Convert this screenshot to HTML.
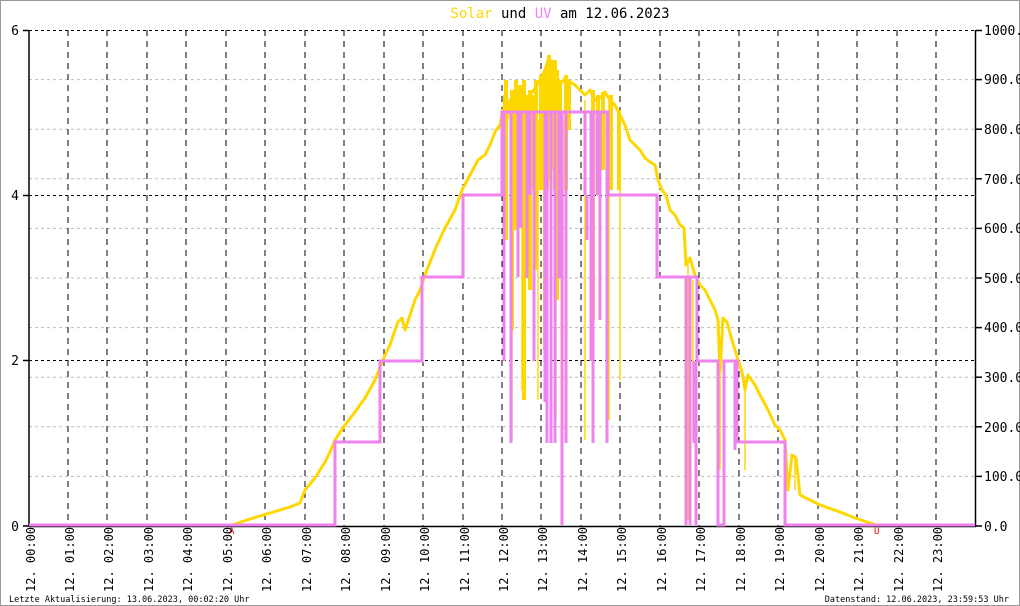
<!DOCTYPE html>
<html><head><meta charset="utf-8"><style>
html,body{margin:0;padding:0;background:#fff}
svg{display:block}
text{font-family:"DejaVu Sans Mono","Liberation Mono",monospace}
</style></head><body>
<svg width="1020" height="606" viewBox="0 0 1020 606" xmlns="http://www.w3.org/2000/svg">
<rect x="0.5" y="0.5" width="1019" height="605" fill="#fff" stroke="#999"/>
<text x="560" y="18" font-size="14" text-anchor="middle"><tspan fill="#FFD700">Solar</tspan> und <tspan fill="#EE82EE">UV</tspan> am 12.06.2023</text>
<g stroke="#bbb" stroke-width="1" stroke-dasharray="3,3">
<line x1="29" x2="975" y1="79.6" y2="79.6"/><line x1="29" x2="975" y1="129.2" y2="129.2"/><line x1="29" x2="975" y1="178.8" y2="178.8"/><line x1="29" x2="975" y1="228.4" y2="228.4"/><line x1="29" x2="975" y1="278" y2="278"/><line x1="29" x2="975" y1="327.6" y2="327.6"/><line x1="29" x2="975" y1="377.2" y2="377.2"/><line x1="29" x2="975" y1="426.8" y2="426.8"/><line x1="29" x2="975" y1="476.4" y2="476.4"/>
</g>
<g stroke="#000" stroke-width="1" stroke-dasharray="3,3">
<line x1="29" x2="975" y1="30.5" y2="30.5"/><line x1="29" x2="975" y1="195.5" y2="195.5"/><line x1="29" x2="975" y1="360.5" y2="360.5"/>
</g>
<g stroke="#000" stroke-width="1" stroke-dasharray="6,5" id="vg">
<line x1="68" x2="68" y1="30" y2="526"/><line x1="107" x2="107" y1="30" y2="526"/><line x1="147" x2="147" y1="30" y2="526"/><line x1="186" x2="186" y1="30" y2="526"/><line x1="226" x2="226" y1="30" y2="526"/><line x1="265" x2="265" y1="30" y2="526"/><line x1="305" x2="305" y1="30" y2="526"/><line x1="344" x2="344" y1="30" y2="526"/><line x1="384" x2="384" y1="30" y2="526"/><line x1="423" x2="423" y1="30" y2="526"/><line x1="463" x2="463" y1="30" y2="526"/><line x1="502" x2="502" y1="30" y2="526"/><line x1="541" x2="541" y1="30" y2="526"/><line x1="581" x2="581" y1="30" y2="526"/><line x1="620" x2="620" y1="30" y2="526"/><line x1="660" x2="660" y1="30" y2="526"/><line x1="699" x2="699" y1="30" y2="526"/><line x1="739" x2="739" y1="30" y2="526"/><line x1="778" x2="778" y1="30" y2="526"/><line x1="818" x2="818" y1="30" y2="526"/><line x1="857" x2="857" y1="30" y2="526"/><line x1="897" x2="897" y1="30" y2="526"/><line x1="936" x2="936" y1="30" y2="526"/>
</g>
<g stroke="#000" stroke-width="1.5" fill="none">
<line x1="29" x2="29" y1="30" y2="527"/><line x1="975.5" x2="975.5" y1="30" y2="527"/><line x1="29" x2="976" y1="526.5" y2="526.5"/>
<line x1="23" x2="29" y1="30.5" y2="30.5"/><line x1="23" x2="29" y1="195.5" y2="195.5"/><line x1="23" x2="29" y1="360.5" y2="360.5"/><line x1="23" x2="29" y1="526" y2="526"/>
<line x1="976" x2="982" y1="30.5" y2="30.5"/><line x1="976" x2="982" y1="79.6" y2="79.6"/><line x1="976" x2="982" y1="129.2" y2="129.2"/><line x1="976" x2="982" y1="178.8" y2="178.8"/><line x1="976" x2="982" y1="228.4" y2="228.4"/><line x1="976" x2="982" y1="278" y2="278"/><line x1="976" x2="982" y1="327.6" y2="327.6"/><line x1="976" x2="982" y1="377.2" y2="377.2"/><line x1="976" x2="982" y1="426.8" y2="426.8"/><line x1="976" x2="982" y1="476.4" y2="476.4"/><line x1="976" x2="982" y1="526" y2="526"/>
</g>
<g font-size="13" fill="#000" text-anchor="end">
<text x="19" y="35">6</text><text x="19" y="200">4</text><text x="19" y="365">2</text><text x="19" y="531">0</text>
</g>
<g font-size="13" fill="#000">
<text x="984" y="35">1000.0</text><text x="984" y="84">900.0</text><text x="984" y="134">800.0</text><text x="984" y="184">700.0</text><text x="984" y="233">600.0</text><text x="984" y="283">500.0</text><text x="984" y="332">400.0</text><text x="984" y="382">300.0</text><text x="984" y="432">200.0</text><text x="984" y="481">100.0</text><text x="984" y="531">0.0</text>
</g>
<!-- solar -->
<g stroke="#FFD700" fill="none" stroke-linejoin="round">
<polyline stroke-width="3" points="29,525 232,525 250,519 270,513 290,507 300,503 305,490 315,478 325,462 330,452 335,440 345,425 355,412 365,398 375,380 385,355 390,345 395,330 398,322 402,318 405,330 410,315 415,300 420,290 425,275 430,262 437,245 445,228 455,210 462,190 470,175 478,160 485,155 490,145 495,132 500,125 503,110 505,132 510,100 515,95 520,90 525,100 530,95 535,88 540,80 545,70 548,60 552,75 555,90 560,85 565,78 570,82 575,85 580,90 585,95 590,90 595,100 600,98 605,92 610,100 615,105 620,115 625,125 630,140 635,145 640,150 645,158 650,162 655,165 658,180 662,190 666,195 670,210 675,215 680,225 684,228 686,265 690,258 695,275 700,285 705,290 710,300 715,310 718,320 720,372 723,318 727,322 732,340 738,360 742,372 745,390 748,375 755,385 760,395 768,410 775,425 780,430 785,440 788,490 792,455 796,458 800,495 810,500 820,505 840,512 855,518 870,523 876,525 975,525"/>
<g stroke-width="4">
<path d="M506 80V240M512 90V330M516 80V230M520 85V180M524 80V400M530 90V290M536 80V270M545 70V350M549 55V180M553 60V170M557 70V300M505 95V190M513 95V185M519 95V190M527 95V190M533 95V190M541 75V190M547 70V190M555 60V190M560 80V190M566 75V190M569 80V130M593 90V320M598 95V190M603 92V170M611 95V190M619 110V190"/>
</g>
<g stroke-width="1.5">
<path d="M512 100V440M522 100V390M538 120V400M551 100V440M556 100V420M563 120V430M585 100V440M609 100V420M620 120V380M688 260V520M693 280V440M720 350V470M745 380V470M795 455V490"/>
</g>
</g>
<!-- UV -->
<g stroke="#EE82EE" fill="none">
<polyline stroke-width="3" points="29,525 335,525 335,442 380,442 380,361 422,361 422,277 463,277 463,195 502,195 502,112 608,112 608,195 657,195 657,277 697,277 697,361 718,361 718,525 724,525 724,361 737,361 737,442 785,442 785,525 975,525"/>
<g stroke-width="3">
<path d="M504 112V361M511 112V443M518 112V277M521 112V228M527 112V278M530 112V195M534 112V361M545 112V402M547 112V443M551 112V443M555 112V443M559 112V278M562 112V525M566 112V443M585 112V195M587 195V240M591 112V361M593 112V443M597 112V195M600 112V320M607 112V443M686 277V525M690 277V525M694 361V443M696 361V525M735 361V450"/>
</g>
</g>
<text x="229" y="534" font-size="9" fill="#e00">A</text>
<text x="874" y="534" font-size="9" fill="#e00">U</text>
<g font-size="12" fill="#000">
<text transform="translate(35,592) rotate(-90)">12. 00:00</text><text transform="translate(74,592) rotate(-90)">12. 01:00</text><text transform="translate(113,592) rotate(-90)">12. 02:00</text><text transform="translate(153,592) rotate(-90)">12. 03:00</text><text transform="translate(192,592) rotate(-90)">12. 04:00</text><text transform="translate(232,592) rotate(-90)">12. 05:00</text><text transform="translate(271,592) rotate(-90)">12. 06:00</text><text transform="translate(311,592) rotate(-90)">12. 07:00</text><text transform="translate(350,592) rotate(-90)">12. 08:00</text><text transform="translate(390,592) rotate(-90)">12. 09:00</text><text transform="translate(429,592) rotate(-90)">12. 10:00</text><text transform="translate(469,592) rotate(-90)">12. 11:00</text><text transform="translate(508,592) rotate(-90)">12. 12:00</text><text transform="translate(547,592) rotate(-90)">12. 13:00</text><text transform="translate(587,592) rotate(-90)">12. 14:00</text><text transform="translate(626,592) rotate(-90)">12. 15:00</text><text transform="translate(666,592) rotate(-90)">12. 16:00</text><text transform="translate(705,592) rotate(-90)">12. 17:00</text><text transform="translate(745,592) rotate(-90)">12. 18:00</text><text transform="translate(784,592) rotate(-90)">12. 19:00</text><text transform="translate(824,592) rotate(-90)">12. 20:00</text><text transform="translate(863,592) rotate(-90)">12. 21:00</text><text transform="translate(903,592) rotate(-90)">12. 22:00</text><text transform="translate(942,592) rotate(-90)">12. 23:00</text>
</g>
<text x="9" y="602" font-size="8.5" fill="#000">Letzte Aktualisierung: 13.06.2023, 00:02:20 Uhr</text>
<text x="1009" y="602" font-size="8.5" fill="#000" text-anchor="end">Datenstand: 12.06.2023, 23:59:53 Uhr</text>
</svg>
</body></html>
